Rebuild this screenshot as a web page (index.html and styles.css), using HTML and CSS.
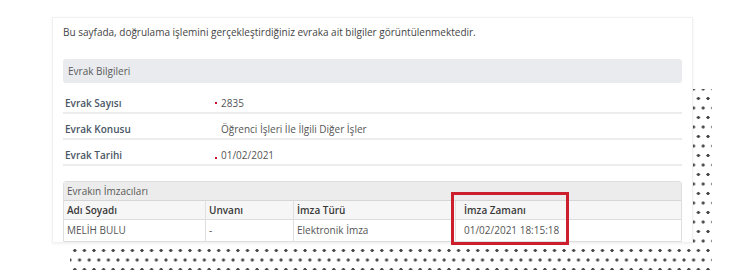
FILE: index.html
```html
<!DOCTYPE html>
<html lang="tr">
<head>
<meta charset="utf-8">
<link rel="stylesheet" href="styles.css">
</head>
<body>
<div class="page">
  <div class="dots"></div>
  <div class="card">
    <p class="intro">Bu sayfada, doğrulama işlemini gerçekleştirdiğiniz evraka ait bilgiler görüntülenmektedir.</p>
    <div class="section-head">Evrak Bilgileri</div>
    <div class="info">
      <div class="row"><div class="label">Evrak Sayısı</div><div class="value"><span class="req"></span>2835</div></div>
      <div class="row"><div class="label">Evrak Konusu</div><div class="value"><span class="req blank"></span>Öğrenci İşleri İle İlgili Diğer İşler</div></div>
      <div class="row"><div class="label">Evrak Tarihi</div><div class="value"><span class="req low"></span>01/02/2021</div></div>
    </div>
    <div class="signers">
      <div class="signers-title">Evrakın İmzacıları</div>
      <div class="grid head">
        <div class="cell">Adı Soyadı</div>
        <div class="cell">Unvanı</div>
        <div class="cell">İmza Türü</div>
        <div class="cell">İmza Zamanı</div>
      </div>
      <div class="grid body">
        <div class="cell">MELİH BULU</div>
        <div class="cell">-</div>
        <div class="cell">Elektronik İmza</div>
        <div class="cell">01/02/2021 18:15:18</div>
      </div>
    </div>
  </div>
  <div class="highlight"></div>
</div>
</body>
</html>
```

FILE: styles.css
```css
* { box-sizing: border-box; }
html, body { margin: 0; padding: 0; background: #fff; }
body {
  font-family: "Open Sans", "Noto Sans", sans-serif;
  font-size: 10px;
  color: #555;
}
.page {
  position: relative;
  width: 740px;
  height: 270px;
  overflow: hidden;
  padding: 17px 0 0 52px;
}
.dots {
  position: absolute;
  left: 70px;
  top: 89px;
  width: 642px;
  height: 190px;
  background-image:
    radial-gradient(circle, #4a4a4a 1.4px, transparent 1.8px),
    radial-gradient(circle, #4a4a4a 1.4px, transparent 1.8px);
  background-size: 9.6px 19px;
  background-position: 0 0, 4.8px 9.5px;
}
.card {
  position: relative;
  width: 641px;
  height: 226px;
  background: #fff;
  border: 1px solid #f0f0f0;
  box-shadow: 0 1px 3px rgba(0,0,0,0.06);
  padding: 5px 10px 0 10px;
  display: flex;
  flex-direction: column;
}
.intro {
  margin: 0;
  line-height: 18px;
  color: #444;
}
.section-head {
  margin-top: 18px;
  height: 24px;
  line-height: 24px;
  background: #e9ebee;
  border-radius: 3px;
  padding-left: 5px;
  color: #5a5a5a;
}
.info { margin-top: 5px; }
.row {
  display: flex;
  height: 26px;
  align-items: flex-end;
  padding-bottom: 2px;
  line-height: 14px;
  border-bottom: 2px solid #ececec;
}
.label {
  width: 150px;
  padding-left: 2px;
  font-weight: 600;
  color: #4a5666;
}
.value {
  display: flex;
  align-items: center;
  color: #555;
}
.req {
  width: 2px;
  height: 2px;
  background: #c8102e;
  margin: 0 4px 0 2px;
}
.req.blank { background: transparent; }
.req.low { margin-top: 5px; }
.signers {
  margin-top: 15px;
  border: 1px solid #dedede;
  border-radius: 3px 3px 0 0;
}
.signers-title {
  height: 19px;
  line-height: 19px;
  background: #ececec;
  border-bottom: 1px solid #d6d6d6;
  padding-left: 3px;
  color: #5a5a5a;
}
.grid {
  display: grid;
  grid-template-columns: 142px 88px 162px 1fr;
}
.grid .cell {
  padding-left: 3px;
  border-right: 1px solid #e0e0e0;
}
.grid .cell:last-child { border-right: none; padding-left: 8px; }
.head {
  height: 19px;
  line-height: 18px;
  background: #f6f6f6;
  border-bottom: 1px solid #dddddd;
}
.head .cell { color: #3a3a3a; font-weight: 600; }
.body {
  height: 21px;
  line-height: 20px;
}
.body .cell { color: #555; }
.highlight {
  position: absolute;
  left: 451px;
  top: 192px;
  width: 118px;
  height: 53px;
  border: 3px solid #cc1f2d;
}
```
